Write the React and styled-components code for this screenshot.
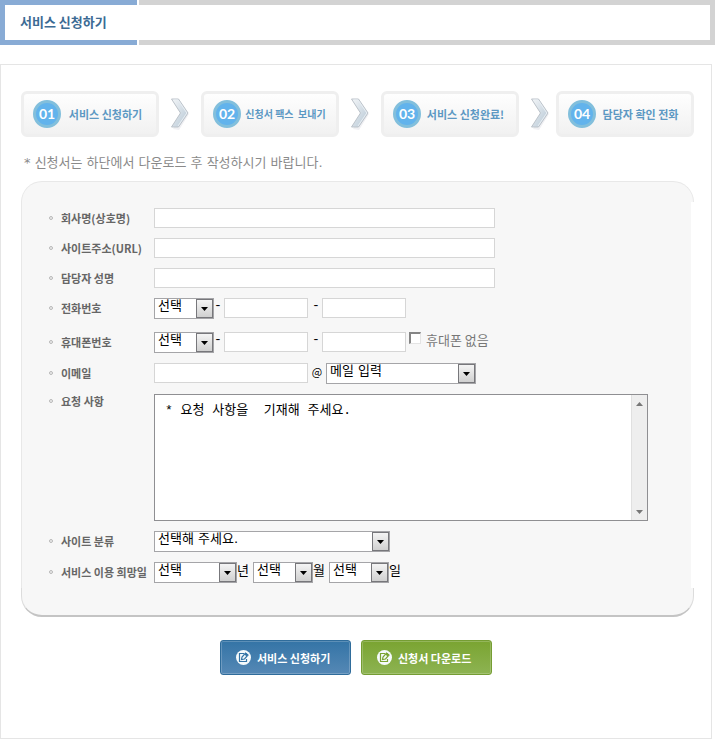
import React from 'react'
import styled, { createGlobalStyle } from 'styled-components'

const steps = [
  { num: '01', label: '서비스 신청하기' },
  { num: '02', label: '신청서 팩스  보내기', small: true },
  { num: '03', label: '서비스 신청완료!' },
  { num: '04', label: '담당자 확인 전화' },
]

const Arrow = () => (
  <ArrowIcon viewBox="0 0 20 34" aria-hidden="true">
    <defs>
      <linearGradient id="arrowFill" x1="0" y1="0" x2="1" y2="1">
        <stop offset="0" stopColor="#f4f6f8" />
        <stop offset="1" stopColor="#b4c6d4" />
      </linearGradient>
    </defs>
    <path d="M3 32 L12 18 L19 17 L9 33 Z" fill="#f0f0f3" />
    <path
      d="M1.5 2 H8.5 L18 16 L8.5 30 H1.5 L10.5 16 Z"
      fill="url(#arrowFill)"
      stroke="#bcc3ca"
    />
    <path d="M3.5 3 H8 L16.8 16 L8 29" fill="none" stroke="#e9eff4" />
  </ArrowIcon>
)

const NoteIcon = () => (
  <svg width="15" height="15" viewBox="0 0 15 15" aria-hidden="true">
    <circle cx="7.5" cy="7.5" r="7.5" fill="#f5fafc" />
    <path
      d="M8 3.5 H3.5 V11.5 H10.5 V9"
      fill="none"
      stroke="currentColor"
      strokeWidth="1.2"
    />
    <path
      d="M5.5 9.5 L6 7 L9.5 3 L12 5 L8.5 9 Z"
      fill="none"
      stroke="currentColor"
      strokeWidth="1.2"
    />
    <path d="M8.5 4.5 L10.5 3 L12 5 L10.5 6.5 Z" fill="currentColor" />
  </svg>
)

const SelectBox = ({ id, label, width, options }) => (
  <SelectWrapper $width={width}>
    <Select id={id} aria-label={label}>
      {options.map((option) => (
        <option key={option}>{option}</option>
      ))}
    </Select>
    <SelectButton>
      <svg width="7" height="4" viewBox="0 0 7 4">
        <path d="M0 0 H7 L3.5 4 Z" fill="#000" />
      </svg>
    </SelectButton>
  </SelectWrapper>
)

const Field = ({ id, label, height, labelHeight = 20, children }) => (
  <Row $height={height}>
    <Label htmlFor={id} $height={labelHeight}>
      {label}
    </Label>
    <Controls>{children}</Controls>
  </Row>
)

const App = () => {
  return (
    <>
      <GlobalStyle />
      <Header>
        <TitleBox>
          <Title>서비스 신청하기</Title>
        </TitleBox>
        <HeaderBar />
      </Header>
      <Main>
        <Steps>
          {steps.map(({ num, label, small }, index) => (
            <React.Fragment key={num}>
              {index > 0 && <Arrow />}
              <Step>
                <StepNumber>{num}</StepNumber>
                <StepLabel $small={small}>{label}</StepLabel>
              </Step>
            </React.Fragment>
          ))}
        </Steps>
        <Notice>* 신청서는 하단에서 다운로드 후 작성하시기 바랍니다.</Notice>
        <form onSubmit={(e) => e.preventDefault()}>
          <PanelTop />
          <PanelBody>
            <Field id="company" label="회사명(상호명)" height={20}>
              <Input id="company" $width={341} />
            </Field>
            <Field id="site" label="사이트주소(URL)" height={20}>
              <Input id="site" $width={341} />
            </Field>
            <Field id="manager" label="담당자 성명" height={20}>
              <Input id="manager" $width={341} />
            </Field>
            <Field id="phone" label="전화번호" height={24}>
              <SelectBox id="phone" width={60} options={['선택', '02', '031']} />
              <Dash $width={10}>-</Dash>
              <Input aria-label="전화번호 가운데 자리" $width={84} />
              <Dash $width={14} $indent={4}>-</Dash>
              <Input aria-label="전화번호 끝자리" $width={84} />
            </Field>
            <Field id="mobile" label="휴대폰번호" height={21}>
              <SelectBox id="mobile" width={60} options={['선택', '010', '011']} />
              <Dash $width={10}>-</Dash>
              <Input aria-label="휴대폰번호 가운데 자리" $width={84} />
              <Dash $width={14} $indent={4}>-</Dash>
              <Input aria-label="휴대폰번호 끝자리" $width={84} />
              <Checkbox type="checkbox" id="noMobile" />
              <CheckLabel htmlFor="noMobile">휴대폰 없음</CheckLabel>
            </Field>
            <Field id="email" label="이메일" height={21}>
              <Input id="email" $width={154} />
              <At>@</At>
              <SelectBox
                label="메일 입력"
                width={150}
                options={['메일 입력', 'naver.com', 'hanmail.net']}
              />
            </Field>
            <Field id="request" label="요청 사항" height={127} labelHeight={14}>
              <TextareaBox>
                <Textarea
                  id="request"
                  defaultValue="* 요청 사항을  기재해 주세요."
                />
                <ScrollTrack>
                  <svg width="7" height="4" viewBox="0 0 7 4">
                    <path d="M0 4 H7 L3.5 0 Z" fill="#777" />
                  </svg>
                  <svg width="7" height="4" viewBox="0 0 7 4">
                    <path d="M0 0 H7 L3.5 4 Z" fill="#777" />
                  </svg>
                </ScrollTrack>
              </TextareaBox>
            </Field>
            <Field id="category" label="사이트 분류" height={21}>
              <SelectBox
                id="category"
                width={236}
                options={['선택해 주세요.', '쇼핑몰', '기업']}
              />
            </Field>
            <Field id="year" label="서비스 이용 희망일" height={21}>
              <SelectBox id="year" width={83} options={['선택', '2010', '2011']} />
              <Unit>년</Unit>
              <SelectBox label="월" width={60} options={['선택', '1', '2']} />
              <Unit>월</Unit>
              <SelectBox label="일" width={60} options={['선택', '1', '2']} />
              <Unit>일</Unit>
            </Field>
          </PanelBody>
          <PanelBottom />
          <Buttons>
            <Button type="submit" $from="#3474a6" $to="#5588b5" $edge="#2f6c9b">
              <NoteIcon />
              서비스 신청하기
            </Button>
            <Button type="button" $from="#7aa431" $to="#8db352" $edge="#759d33">
              <NoteIcon />
              신청서 다운로드
            </Button>
          </Buttons>
        </form>
      </Main>
    </>
  )
}

export default App

const GlobalStyle = createGlobalStyle`
  *, *::before {
    box-sizing: border-box;
  }
  body {
    margin: 0;
    background: #fff;
    color: #000;
  }
  body, input, select, button {
    font-family: 'Noto Sans CJK KR', 'Liberation Sans', sans-serif;
    font-size: 13px;
  }
`
const Header = styled.header`
  display: flex;
  gap: 2px;
  height: 45px;
`
const TitleBox = styled.div`
  display: flex;
  align-items: center;
  width: 137px;
  padding-left: 15px;
  border: 5px solid #88abd5;
  border-right: 0;
`
const Title = styled.h1`
  margin: 0 0 2px;
  font-size: 13px;
  line-height: 20px;
  font-weight: 700;
  color: #3c6b94;
`
const HeaderBar = styled.div`
  flex: 1;
  border: 5px solid #d3d3d3;
  border-left: 0;
`
const Main = styled.main`
  margin: 19px 3px 0 0;
  padding: 26px 17px 63px 20px;
  border: 1px solid #e5e5e5;
`
const Steps = styled.div`
  display: flex;
  align-items: center;
  gap: 11px;
`
const Step = styled.div`
  display: flex;
  align-items: center;
  width: 138px;
  height: 46px;
  padding: 0 6px 0 9px;
  border: 3px solid #efefef;
  border-radius: 6px;
  background: linear-gradient(#fefefe, #f1f1f1);
`
const StepNumber = styled.span`
  flex: none;
  width: 28px;
  height: 28px;
  border: 3px solid #82bfdc;
  border-radius: 50%;
  background: #62b3ec;
  color: #fff;
  font-family: Lato, sans-serif;
  font-size: 14px;
  line-height: 22px;
  font-weight: 700;
  text-align: center;
`
const StepLabel = styled.span`
  flex: 1;
  font-size: ${({ $small }) => ($small ? '10px' : '11px')};
  line-height: 18px;
  font-weight: 700;
  color: #5c98c3;
  text-align: center;
  white-space: pre;
`
const ArrowIcon = styled.svg`
  flex: none;
  width: 20px;
  height: 34px;
  &:last-of-type {
    margin-right: -5px;
  }
`
const Notice = styled.p`
  margin: 16px 0 8px;
  padding-left: 3px;
  font-family: 'DejaVu Sans', 'Noto Sans CJK KR', sans-serif;
  line-height: 20px;
  color: #8a8a8a;
`
const PanelTop = styled.div`
  height: 21px;
  border: 1px solid #e8e8e8;
  border-bottom: 0;
  border-radius: 21px 21px 0 0;
  background: #f7f7f7;
`
const PanelBody = styled.div`
  display: flex;
  flex-direction: column;
  gap: 10px;
  margin-right: 3px;
  padding: 6px 0 5px 27px;
  border-left: 1px solid #e8e8e8;
  background: #f7f7f7;
`
const PanelBottom = styled.div`
  height: 29px;
  border: 1px solid #dcdcdc;
  border-top: 0;
  border-bottom: 2px solid #c4c4c4;
  border-radius: 0 0 21px 21px;
  background: #f7f7f7;
`
const Row = styled.div`
  display: flex;
  align-items: flex-start;
  height: ${({ $height }) => $height}px;
`
const Label = styled.label`
  display: flex;
  align-items: center;
  gap: 8px;
  flex: none;
  width: 105px;
  font-size: 11px;
  line-height: ${({ $height }) => $height}px;
  font-weight: 700;
  color: #666;
  white-space: nowrap;
  &::before {
    content: '';
    width: 4px;
    height: 4px;
    border: 1px solid #b8b8b8;
    border-radius: 50%;
    background: #eee;
  }
`
const Controls = styled.div`
  display: flex;
  flex: 1;
  align-items: flex-start;
`
const Input = styled.input`
  width: ${({ $width }) => $width}px;
  height: 20px;
  padding: 0 4px;
  border: 1px solid #d6d6d6;
  border-radius: 0;
  background: #fff;
`
const Dash = styled.span`
  width: ${({ $width }) => $width}px;
  padding-left: ${({ $indent = 0 }) => $indent}px;
  font-family: 'Liberation Mono', monospace;
  line-height: 16px;
`
const At = styled.span`
  width: 18px;
  font-size: 11px;
  line-height: 16px;
  text-align: center;
`
const Unit = styled.span`
  width: 16px;
  line-height: 16px;
`
const SelectWrapper = styled.div`
  position: relative;
  width: ${({ $width }) => $width}px;
  height: 21px;
`
const Select = styled.select`
  display: block;
  width: 100%;
  height: 21px;
  padding: 0 20px 5px 3px;
  border: 1px solid #a5a5a8;
  border-radius: 0;
  background: #fff;
  color: #000;
  font-family: 'DejaVu Sans', 'Noto Sans CJK KR', sans-serif;
  line-height: 14px;
  appearance: none;
`
const SelectButton = styled.span`
  position: absolute;
  top: 1px;
  right: 1px;
  display: flex;
  align-items: center;
  justify-content: center;
  width: 17px;
  height: 19px;
  border: 1px solid #77777b;
  background: linear-gradient(#f4f4f4, #d0d0d0);
  pointer-events: none;
`
const Checkbox = styled.input`
  width: 12px;
  height: 12px;
  margin: 0 5px 0 3px;
  border: 1px solid #e4e4e4;
  border-top: 2px solid #858585;
  border-left: 2px solid #858585;
  background: #fff;
  appearance: none;
  &:checked {
    background: #555;
  }
`
const CheckLabel = styled.label`
  line-height: 16px;
  color: #777;
`
const TextareaBox = styled.div`
  display: flex;
  width: 494px;
  height: 127px;
  border: 1px solid #8f8f92;
  background: #fff;
`
const Textarea = styled.textarea`
  flex: 1;
  padding: 6px 10px;
  border: 0;
  background: none;
  font-family: 'Liberation Mono', 'Noto Sans CJK KR', monospace;
  font-size: 13px;
  line-height: 20px;
  resize: none;
  overflow: hidden;
`
const ScrollTrack = styled.div`
  display: flex;
  flex-direction: column;
  align-items: center;
  justify-content: space-between;
  width: 16px;
  padding: 7px 0 6px;
  border-left: 1px solid #e0e0e0;
  background: #eee;
`
const Buttons = styled.div`
  display: flex;
  justify-content: center;
  gap: 10px;
  margin: 23px 3px 0 0;
`
const Button = styled.button`
  display: flex;
  align-items: center;
  gap: 6px;
  width: 131px;
  height: 35px;
  padding: 0 0 0 15px;
  border: 1px solid ${({ $edge }) => $edge};
  border-radius: 3px;
  background: linear-gradient(${({ $from, $to }) => `${$from}, ${$to}`});
  box-shadow: inset 0 0 0 1px rgba(255, 255, 255, 0.2);
  color: #fff;
  font-size: 11px;
  font-weight: 700;
  white-space: nowrap;
  cursor: pointer;
  svg {
    color: ${({ $from }) => $from};
  }
`
